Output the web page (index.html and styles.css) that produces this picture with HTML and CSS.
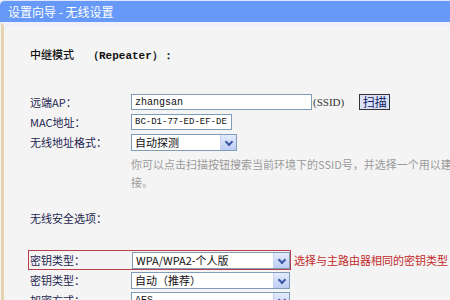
FILE: index.html
```html
<!DOCTYPE html>
<html>
<head>
  <title>设置向导 - 无线设置</title>
  <link rel="stylesheet" href="styles.css">
</head>
<body>
  <div class="title">设置向导 - 无线设置</div>

  <div class="panel">
    <div class="mode">中继模式<span class="mode-en">（Repeater）：</span></div>

    <div class="row first">
      <label>远端AP：</label>
      <input type="text" class="ssid-input" value="zhangsan">
      <span class="unit">(SSID)</span>
      <button class="scan">扫描</button>
    </div>

    <div class="row">
      <label>MAC地址：</label>
      <input type="text" class="mac-input" value="BC-D1-77-ED-EF-DE">
    </div>

    <div class="row">
      <label>无线地址格式：</label>
      <div class="select short"><span>自动探测</span><i class="arrow"></i></div>
    </div>

    <p class="hint">你可以点击扫描按钮搜索当前环境下的SSID号，并选择一个用以建立连<br>接。</p>

    <div class="row section">
      <label>无线安全选项：</label>
    </div>

    <div class="row marked">
      <div class="mark-box">
        <label>密钥类型：</label>
        <div class="select long"><span>WPA/WPA2-个人版</span><i class="arrow"></i></div>
      </div>
      <span class="tip">选择与主路由器相同的密钥类型</span>
    </div>

    <div class="row">
      <label>密钥类型：</label>
      <div class="select long"><span>自动（推荐）</span><i class="arrow"></i></div>
    </div>

    <div class="row">
      <label>加密方式：</label>
      <div class="select long"><span class="mono">AES</span><i class="arrow"></i></div>
    </div>
  </div>
</body>
</html>
```

FILE: styles.css
```css
body {
  margin: 0;
  width: 450px;
  height: 300px;
  overflow: hidden;
  background-color: #f4f4f4;
  font-family: "Noto Sans CJK SC", "DejaVu Sans", sans-serif;
  font-size: 11px;
  color: #1e2650;
}

.title {
  height: 21px;
  line-height: 21px;
  padding-left: 8px;
  background-color: #6699f8;
  border-top: 1px solid #dde6fb;
  border-top-left-radius: 5px;
  color: #fff;
  font-size: 12px;
}

.panel {
  border-left: 3px solid #e6d3b0;
  margin-left: 1px;
  padding-left: 26px;
  padding-top: 20px;
  border-top: 4px solid #eff0f8;
}

.mode {
  height: 16px;
  line-height: 16px;
  font-size: 11px;
  font-weight: 500;
  color: #111;
}
.mode-en {
  margin-left: 14px;
  font-family: "Liberation Mono", monospace;
  font-size: 11px;
  font-weight: bold;
}

.row {
  display: flex;
  align-items: center;
  height: 20px;
  white-space: nowrap;
}
.row.first {
  margin-top: 30px;
}
.row.section {
  margin-top: 17px;
}
.row.marked {
  margin-top: 22px;
}

label {
  width: 101px;
  flex: none;
}

input[type="text"] {
  box-sizing: border-box;
  height: 16px;
  padding: 0 3px;
  border: 1px solid #7f9db9;
  background-color: #fff;
  font-family: "Liberation Mono", monospace;
  color: #111;
  outline: none;
}
.ssid-input {
  width: 181px;
  font-size: 10px;
}
.mac-input {
  width: 101px;
  font-size: 9px;
}

.unit {
  margin-left: 1px;
  font-family: "Liberation Serif", serif;
  font-size: 11px;
  color: #333;
}

.scan {
  margin-left: 15px;
  height: 16px;
  width: 31px;
  padding: 0;
  border: 1px solid #333;
  background-color: #dbe2f7;
  font-family: "Noto Sans CJK SC", sans-serif;
  font-size: 12px;
  line-height: 14px;
  color: #102060;
}

.select {
  box-sizing: border-box;
  display: flex;
  align-items: center;
  height: 17px;
  border: 1px solid #7f9db9;
  background-color: #fff;
  color: #111;
}
.select span {
  flex: 1;
  padding-left: 3px;
  overflow: hidden;
}
.select.short {
  width: 106px;
}
.select.long {
  width: 159px;
}
.mono {
  font-family: "Liberation Mono", monospace;
  font-size: 10px;
}

.arrow {
  position: relative;
  width: 15px;
  height: 15px;
  flex: none;
  background: linear-gradient(#e4ebfb, #bccdf3);
  border-left: 1px solid #c4d2ee;
}
.arrow::after {
  content: "";
  position: absolute;
  left: 5px;
  top: 4px;
  width: 4px;
  height: 4px;
  border-right: 2px solid #3d5aa8;
  border-bottom: 2px solid #3d5aa8;
  transform: rotate(45deg);
}

.hint {
  margin: 3px 0 0 101px;
  line-height: 18px;
  color: #9a9a9a;
  white-space: nowrap;
}

.mark-box {
  display: flex;
  align-items: center;
  height: 20px;
  margin-left: -2px;
  padding-left: 1px;
  border: 1px solid #b8404c;
  box-sizing: border-box;
  width: 263px;
}
.mark-box label {
  width: 102px;
}
.tip {
  margin-left: 3px;
  color: #c42a2a;
}
```
